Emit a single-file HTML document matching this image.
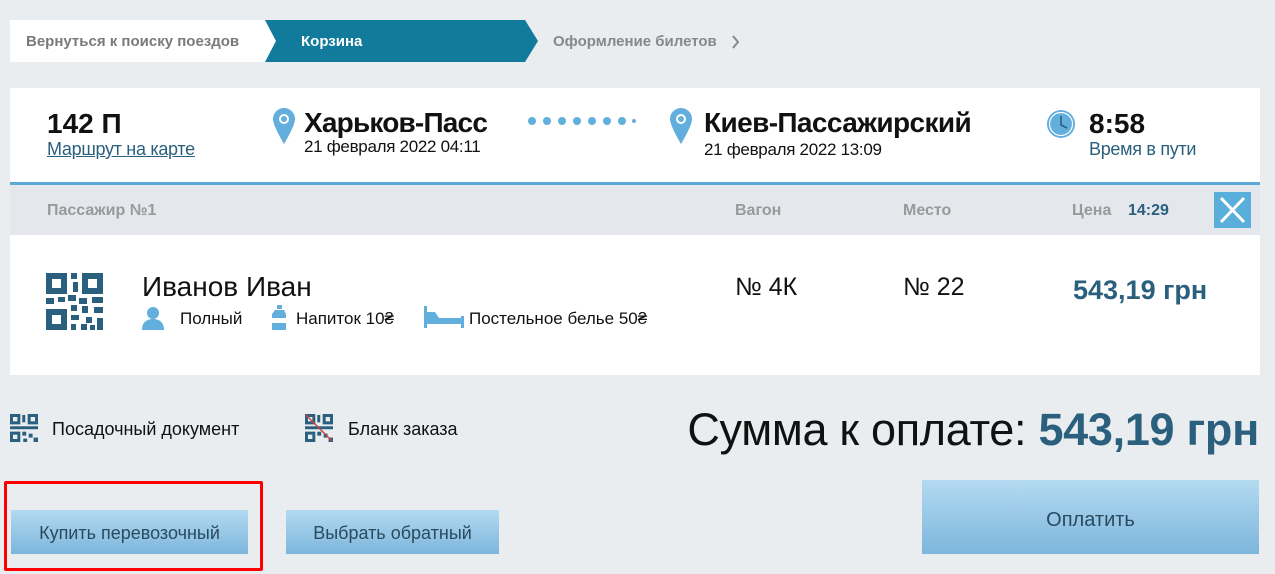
<!DOCTYPE html>
<html><head><meta charset="utf-8"><style>
*{margin:0;padding:0;box-sizing:border-box}
body{width:1275px;height:574px;background:#e9edf0;font-family:"Liberation Sans Narrow","Liberation Sans",sans-serif;position:relative;overflow:hidden;color:#111}
.a{position:absolute;white-space:nowrap}
.btn{position:absolute;background:linear-gradient(#b3daf1,#7db6dc);color:#2a4a5e;font-size:18px;display:flex;align-items:center;justify-content:center}
</style></head><body>
<svg class="a" style="left:0;top:0" width="760" height="70">
<polygon points="10,20 265,20 276,41 265,62 10,62" fill="#fff"/>
<polygon points="265,20 525,20 538,41 525,62 265,62 276,41" fill="#127b9b"/>
<polyline points="733,36 738,42 733,48" fill="none" stroke="#888" stroke-width="2"/>
</svg>
<div class="a" style="left:26px;top:33px;font-size:15px;font-weight:bold;color:#7a7a7a">Вернуться к поиску поездов</div>
<div class="a" style="left:301px;top:33px;font-size:15px;font-weight:bold;color:#fff">Корзина</div>
<div class="a" style="left:553px;top:33px;font-size:15px;font-weight:bold;color:#888">Оформление билетов</div>

<div class="a" style="left:10px;top:88px;width:1250px;height:287px;background:#fff"></div>
<div class="a" style="left:10px;top:182px;width:1250px;height:3px;background:#5aa9d6"></div>
<div class="a" style="left:10px;top:185px;width:1250px;height:50px;background:#e4e8ed"></div>

<div class="a" style="left:47px;top:108px;font-size:28px;font-weight:bold">142 П</div>
<div class="a" style="left:47px;top:139px;font-size:18px;color:#2a5f7e;text-decoration:underline;letter-spacing:-0.3px">Маршрут на карте</div>

<svg class="a" style="left:272px;top:107px" width="24" height="38"><path d="M12 1C6 1 1 6 1 12c0 7 11 25 11 25s11-18 11-25C23 6 18 1 12 1z" fill="#62aedc"/><circle cx="12" cy="12" r="5" fill="#fff"/><circle cx="12" cy="12" r="3" fill="#62aedc"/></svg>
<div class="a" style="left:304px;top:107px;font-size:28px;font-weight:bold;letter-spacing:-0.8px">Харьков-Пасс</div>
<div class="a" style="left:304px;top:137px;font-size:17px;letter-spacing:-0.3px">21 февраля 2022 04:11</div>
<svg class="a" style="left:526px;top:116px" width="110" height="10"><g fill="#62aedc"><circle cx="6" cy="5" r="4"/><circle cx="21" cy="5" r="4"/><circle cx="36" cy="5" r="4"/><circle cx="51" cy="5" r="4"/><circle cx="66" cy="5" r="4"/><circle cx="81" cy="5" r="4"/><circle cx="96" cy="5" r="4"/><circle cx="108" cy="5" r="2"/></g></svg>
<svg class="a" style="left:669px;top:107px" width="24" height="38"><path d="M12 1C6 1 1 6 1 12c0 7 11 25 11 25s11-18 11-25C23 6 18 1 12 1z" fill="#62aedc"/><circle cx="12" cy="12" r="5" fill="#fff"/><circle cx="12" cy="12" r="3" fill="#62aedc"/></svg>
<div class="a" style="left:704px;top:107px;font-size:28px;font-weight:bold;letter-spacing:-0.6px">Киев-Пассажирский</div>
<div class="a" style="left:704px;top:140px;font-size:17px;letter-spacing:-0.3px">21 февраля 2022 13:09</div>
<svg class="a" style="left:1046px;top:109px" width="30" height="30"><circle cx="15" cy="15" r="14" fill="#62aedc"/><circle cx="15" cy="15" r="11.5" fill="none" stroke="#fff" stroke-width="1.2"/><polyline points="15,7 15,16 21,19" fill="none" stroke="#2a5f7e" stroke-width="1.6"/></svg>
<div class="a" style="left:1089px;top:108px;font-size:28px;font-weight:bold">8:58</div>
<div class="a" style="left:1089px;top:139px;font-size:18px;color:#2a5f7e;letter-spacing:-0.3px">Время в пути</div>

<div class="a" style="left:47px;top:202px;font-size:16px;font-weight:bold;color:#999">Пассажир №1</div>
<div class="a" style="left:735px;top:202px;font-size:16px;font-weight:bold;color:#999">Вагон</div>
<div class="a" style="left:903px;top:202px;font-size:16px;font-weight:bold;color:#999">Место</div>
<div class="a" style="left:1072px;top:202px;font-size:16px;font-weight:bold;color:#999">Цена</div>
<div class="a" style="left:1128px;top:202px;font-size:16px;font-weight:bold;color:#2a5f7e">14:29</div>
<svg class="a" style="left:1214px;top:192px" width="37" height="36"><rect width="37" height="36" fill="#5aaedb"/><path d="M7 6L30 30M30 6L7 30" stroke="#fff" stroke-width="3"/></svg>

<svg class="a" style="left:46px;top:273px" width="57" height="57" viewBox="0 0 57 57"><g fill="#2a5f7e">
<path d="M0 0h21v21H0zM6 6v9h9V6z" fill-rule="evenodd"/><path d="M36 0h21v21H36zM42 6v9h9V6z" fill-rule="evenodd"/><path d="M0 36h21v21H0zM6 42v9h9v-9z" fill-rule="evenodd"/>
<rect x="25" y="0" width="6" height="6"/><rect x="27" y="9" width="5" height="10"/><rect x="0" y="25" width="8" height="6"/><rect x="12" y="24" width="7" height="5"/><rect x="22" y="22" width="8" height="6"/><rect x="33" y="25" width="8" height="6"/><rect x="46" y="24" width="11" height="6"/><rect x="25" y="32" width="6" height="6"/><rect x="36" y="33" width="6" height="7"/><rect x="48" y="34" width="9" height="6"/><rect x="25" y="42" width="8" height="5"/><rect x="40" y="44" width="6" height="6"/><rect x="51" y="45" width="6" height="12"/><rect x="25" y="51" width="5" height="6"/><rect x="35" y="51" width="6" height="6"/><rect x="44" y="52" width="5" height="5"/></g></svg>
<div class="a" style="left:142px;top:271px;font-size:28px">Иванов Иван</div>
<svg class="a" style="left:141px;top:306px" width="24" height="24"><circle cx="12" cy="7" r="6" fill="#62aedc"/><path d="M1 24c0-8 5-11 11-11s11 3 11 11z" fill="#62aedc"/></svg>
<div class="a" style="left:180px;top:309px;font-size:17px">Полный</div>
<svg class="a" style="left:272px;top:305px" width="14" height="25"><rect x="5" y="0" width="5" height="4" fill="#62aedc"/><path d="M3 5h9l2 4v16H0V9z" fill="#62aedc"/><rect x="0" y="13" width="14" height="5" fill="#fff"/></svg>
<div class="a" style="left:296px;top:309px;font-size:17px">Напиток 10₴</div>
<svg class="a" style="left:424px;top:306px" width="40" height="22"><rect x="0" y="0" width="3" height="22" fill="#62aedc"/><rect x="37" y="10" width="3" height="12" fill="#62aedc"/><path d="M3 6h8l4 6h22v6H3z" fill="#62aedc"/></svg>
<div class="a" style="left:469px;top:309px;font-size:17px">Постельное белье 50₴</div>
<div class="a" style="left:735px;top:273px;font-size:25px">№ 4К</div>
<div class="a" style="left:903px;top:273px;font-size:25px">№ 22</div>
<div class="a" style="left:1073px;top:275px;font-size:27px;font-weight:bold;color:#2a5f7e">543,19 грн</div>

<svg class="a" style="left:10px;top:414px" width="28" height="28" viewBox="0 0 57 57"><g fill="#2a5f7e"><path d="M0 0h21v21H0zM6 6v9h9V6z" fill-rule="evenodd"/><path d="M36 0h21v21H36zM42 6v9h9V6z" fill-rule="evenodd"/><path d="M0 36h21v21H0zM6 42v9h9v-9z" fill-rule="evenodd"/><rect x="25" y="2" width="6" height="15"/><rect x="0" y="25" width="57" height="6"/><rect x="25" y="36" width="8" height="8"/><rect x="38" y="40" width="8" height="8"/><rect x="48" y="48" width="9" height="9"/><rect x="27" y="50" width="8" height="7"/></g></svg>
<div class="a" style="left:52px;top:419px;font-size:18px">Посадочный документ</div>
<svg class="a" style="left:305px;top:414px" width="28" height="28" viewBox="0 0 57 57"><g fill="#2a5f7e"><path d="M0 0h21v21H0zM6 6v9h9V6z" fill-rule="evenodd"/><path d="M36 0h21v21H36zM42 6v9h9V6z" fill-rule="evenodd"/><path d="M0 36h21v21H0zM6 42v9h9v-9z" fill-rule="evenodd"/><rect x="25" y="2" width="6" height="15"/><rect x="0" y="25" width="57" height="6"/><rect x="25" y="36" width="8" height="8"/><rect x="38" y="40" width="8" height="8"/><rect x="48" y="48" width="9" height="9"/></g><path d="M2 2L55 55" stroke="#c44" stroke-width="3"/></svg>
<div class="a" style="left:348px;top:419px;font-size:18px">Бланк заказа</div>
<div class="a" style="right:16px;top:404px;font-size:45px;letter-spacing:-0.3px">Сумма к оплате: <b style="color:#2a5f7e">543,19 грн</b></div>

<div class="a" style="left:4px;top:481px;width:259px;height:90px;border:3px solid #f00;border-radius:2px"></div>
<div class="btn" style="left:11px;top:510px;width:237px;height:44px;padding-top:2px">Купить перевозочный</div>
<div class="btn" style="left:286px;top:510px;width:213px;height:44px;padding-top:2px">Выбрать обратный</div>
<div class="btn" style="left:922px;top:480px;width:337px;height:74px;font-size:20px;padding-top:6px">Оплатить</div>
</body></html>
